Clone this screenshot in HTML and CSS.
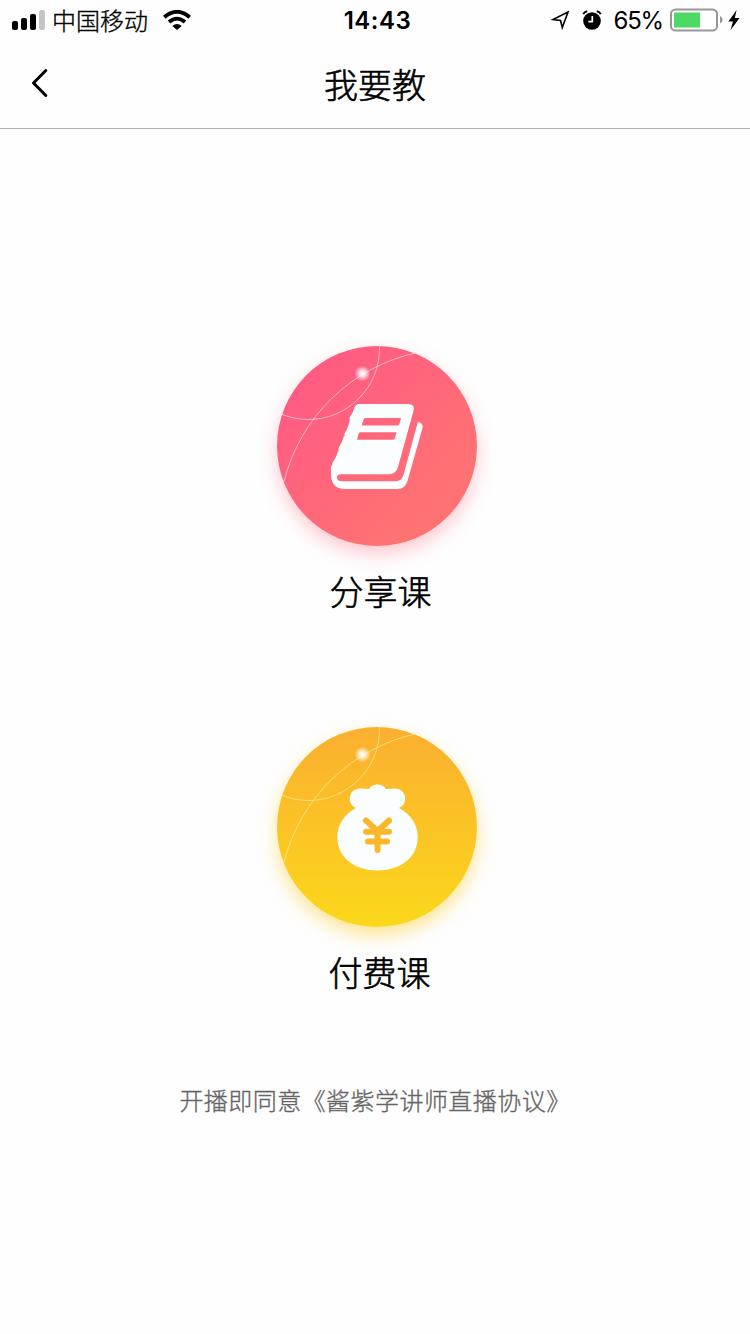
FILE: index.html
```
<!DOCTYPE html>
<html lang="zh-CN">
<head>
  <meta charset="UTF-8">
  <meta name="viewport" content="width=device-width, initial-scale=1.0">
  <title>我要教</title>
  <link rel="stylesheet" href="styles.css">
</head>
<body>
  <!-- Status bar -->
  <div class="status-bar">
    <div class="status-left">
      <svg class="signal" width="34" height="20" viewBox="0 0 34 20">
        <rect x="0" y="11" width="6" height="9" rx="2"></rect>
        <rect x="9" y="8" width="6" height="12" rx="2"></rect>
        <rect x="18" y="4" width="6" height="16" rx="2"></rect>
        <rect x="27" y="0" width="6" height="20" rx="2" fill="#c4c4c4"></rect>
      </svg>
      <span class="carrier">中国移动</span>
      <svg class="wifi" width="28" height="20" viewBox="0 0 28 20" fill="none" stroke="#000" stroke-width="3.8">
        <path d="M1.3 7.2 Q14 -3.6 26.7 7.2"></path>
        <path d="M6 12 Q14 5.2 22 12"></path>
        <path d="M14 20 L9.3 15.9 Q14 12 18.7 15.9 Z" fill="#000" stroke="none"></path>
      </svg>
    </div>
    <div class="time">14:43</div>
    <div class="status-right">
      <svg class="location" width="20" height="20" viewBox="0 0 20 20" fill="none" stroke="#000" stroke-width="1.6">
        <path d="M18 2 L3 9.500 L10.500 10.500 L12.300 17.500 Z"></path>
      </svg>
      <svg class="alarm" width="20" height="20" viewBox="0 0 20 20" fill="none">
        <circle cx="10" cy="11" r="8.8" fill="#000"></circle>
        <path d="M1.2 4.2 Q2.4 1.6 5.2 1.2 M14.8 1.2 Q17.6 1.6 18.8 4.2" stroke="#000" stroke-width="2"></path>
        <path d="M10.3 6 V11.6 H6.4" stroke="#fff" stroke-width="1.7"></path>
      </svg>
      <span class="percent">65%</span>
      <svg class="battery" width="53" height="24" viewBox="0 0 53 24">
        <rect x="1" y="1.5" width="46" height="21" rx="4.5" fill="#fff" stroke="#979797" stroke-width="2"></rect>
        <rect x="4" y="4.5" width="26" height="15" fill="#4cd964"></rect>
        <path d="M50 8 Q52.6 9 52.6 11.7 Q52.6 14.4 50 15.4 Z" fill="#979797"></path>
      </svg>
      <svg class="bolt" width="12" height="20" viewBox="0 0 12 20">
        <path d="M8.6 0 L0.4 11.4 H5 L2.6 20 L11.6 8 H6.8 Z"></path>
      </svg>
    </div>
  </div>

  <!-- Navigation -->
  <div class="nav-bar">
    <svg class="back" width="20" height="32" viewBox="0 0 20 32" fill="none" stroke="#000" stroke-width="3" stroke-linecap="round" stroke-linejoin="round">
      <path d="M15.8 2.500 L3.500 15 L15.800 27.500"></path>
    </svg>
    <div class="nav-title">我要教</div>
  </div>

  <!-- Course types -->
  <div class="content">
    <div class="course">
      <div class="badge badge-share">
        <svg width="200" height="200" viewBox="0 0 200 200">
          <defs>
            <radialGradient id="glow">
              <stop offset="0" stop-color="#fff"></stop>
              <stop offset="0.35" stop-color="#fff" stop-opacity="0.8"></stop>
              <stop offset="1" stop-color="#fff" stop-opacity="0"></stop>
            </radialGradient>
          </defs>
          <g fill="none" stroke="#fff" stroke-opacity="0.55">
            <circle cx="31.5" cy="2.5" r="71"></circle>
            <path d="M139.7 6.7 A175 175 0 0 0 7 135.7"></path>
          </g>
          <circle cx="85.5" cy="27.5" r="8" fill="url(#glow)"></circle>
          <path fill="#fafefe" fill-rule="evenodd" d="M82 58 H131 Q138.500 58 136.500 65 L121 121 Q119 128.300 112 128.300 H64 Q60 128.300 60 131.300 Q60 135.200 65 135.200 H119 Q124.500 135.200 126.500 129 L140.300 78 Q141 75 143 76.500 Q146.400 78.500 145.500 82 L130.500 135 Q128 143 120.500 143 H68 Q54 143 54 128 V120.500 Q56 119.500 55.300 117 Q59.500 111 60.500 106.500 Q62 105 61.500 102 Q65.500 96 66.500 91 Q68 90 67.500 87.500 Q71.500 81 72 77 Q73.500 74.500 72.500 71.500 Q76 67 77.500 61.500 Q79 58 82 58 Z M88.500 72 Q87 72 86.500 73.700 L84.700 79.500 H120 Q122 79.500 122.500 77.700 L124 72 Z M83.500 86.300 Q82 86.300 81.500 88 L80 93.700 H115.500 Q117.500 93.700 118 92 L119.500 86.300 Z"></path>
        </svg>
      </div>
      <div class="course-name">分享课</div>
    </div>

    <div class="course course-pay">
      <div class="badge badge-pay">
        <svg width="200" height="200" viewBox="0 0 200 200">
          <g fill="none" stroke="#fff3a0" stroke-opacity="0.65">
            <circle cx="31.5" cy="2.5" r="71"></circle>
            <path d="M139.7 6.7 A175 175 0 0 0 7 135.7"></path>
          </g>
          <circle cx="85.5" cy="27.5" r="8" fill="url(#glow)"></circle>
          <path fill="#fafefe" d="M79 81 C69 77 71.500 61.500 83 61.500 Q88 61.500 92 62 Q94.500 57.500 100.500 57.500 Q106.500 57.500 109 62 Q113 61.500 118 61.500 C129.500 61.500 132 77 122 81 C134 87.500 140.700 98 140.700 110 C140.700 130 124 143.500 100.500 143.500 C77 143.500 60.300 130 60.300 110 C60.300 98 67 87.500 79 81 Z"></path>
          <path fill="none" stroke="#fcb62a" stroke-width="6" stroke-linecap="round" stroke-linejoin="round" d="M89 93.500 L100.500 104 L112 93.500 M89 104.700 H112 M91 114.500 H110 M100.500 104 V123"></path>
        </svg>
      </div>
      <div class="course-name">付费课</div>
    </div>

    <div class="agreement">开播即同意《酱紫学讲师直播协议》</div>
  </div>
</body>
</html>
```
FILE: styles.css
```
* {
  margin: 0;
  padding: 0;
  box-sizing: border-box;
}

body {
  width: 750px;
  height: 1334px;
  background: #fefefe;
  color: #000000;
  font-family: "Noto Sans CJK SC", sans-serif;
  font-weight: 300;
  overflow: hidden;
}

svg {
  display: block;
  flex-shrink: 0;
}

.status-bar {
  display: grid;
  grid-template-columns: 1fr auto 1fr;
  align-items: center;
  height: 40px;
  padding: 0 10px 0 12px;
}

.status-left,
.status-right {
  display: flex;
  align-items: center;
}

.status-right {
  justify-content: flex-end;
}

.carrier {
  margin-left: 6px;
  font-size: 24px;
  line-height: 40px;
  -webkit-text-stroke: 0.35px #000000;
}

.wifi {
  margin-left: 15px;
}

.time {
  padding-left: 3px;
  font-family: Inter, sans-serif;
  font-size: 24px;
  font-weight: 600;
  letter-spacing: 0.5px;
}

.alarm {
  margin-left: 12px;
}

.percent {
  margin-left: 12px;
  font-family: Inter, sans-serif;
  font-size: 24px;
  font-weight: 400;
  letter-spacing: -1.2px;
}

.battery {
  margin-left: 7px;
}

.bolt {
  margin-left: 5px;
}

.nav-bar {
  display: grid;
  grid-template-columns: 1fr auto 1fr;
  align-items: center;
  height: 89px;
  padding: 0 30px;
  border-bottom: 1px solid #b2b2b2;
}

.nav-title {
  font-size: 34px;
  line-height: 86px;
  -webkit-text-stroke: 0.6px #000000;
}

.content {
  display: flex;
  flex-direction: column;
  align-items: center;
  padding-top: 217px;
}

.course {
  display: flex;
  flex-direction: column;
  align-items: center;
  padding-left: 4px;
}

.course-pay {
  margin-top: 111px;
}

.badge {
  width: 200px;
  height: 200px;
  border-radius: 50%;
  overflow: hidden;
}

.badge-share {
  background: linear-gradient(135deg, #ff5984 12%, #ff7272 78%);
  box-shadow: 0 8px 18px rgba(255, 100, 120, 0.35);
}

.badge-pay {
  background: linear-gradient(180deg, #fbaf30, #fbd81b);
  box-shadow: 0 8px 18px rgba(252, 205, 40, 0.5);
}

.course-name {
  height: 50px;
  margin-top: 20px;
  padding-left: 7px;
  font-size: 34px;
  line-height: 50px;
  -webkit-text-stroke: 0.6px #000000;
}

.course-pay .course-name {
  padding-left: 5px;
}

.agreement {
  margin-top: 85px;
  color: #666666;
  font-size: 24px;
  letter-spacing: 0.45px;
  line-height: 36px;
  -webkit-text-stroke: 0.35px #666666;
}
```
